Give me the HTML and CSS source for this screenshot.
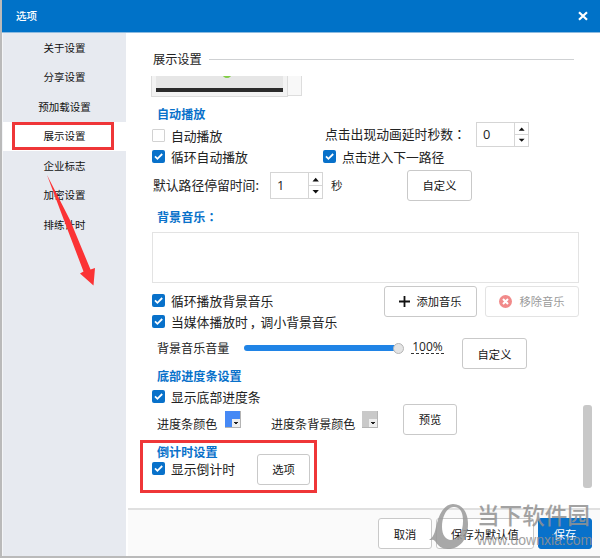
FILE: index.html
```html
<!DOCTYPE html>
<html lang="zh-CN">
<head>
<meta charset="utf-8">
<title>选项</title>
<link rel="stylesheet" href="styles.css">
</head>
<body>
<svg class="defs" width="0" height="0">
  <symbol id="check" viewBox="0 0 13 13"><path d="M3 6.4 5.4 8.8 10.2 4" fill="none" stroke="#fff" stroke-width="1.8"/></symbol>
  <symbol id="arrows" viewBox="0 0 12 25"><path d="M3 8.500h6.400L6.200 4.800zM3 17h6.400L6.200 20.500z" fill="#111"/></symbol>
</svg>
<div class="window">
  <header class="titlebar">
    <span>选项</span>
    <svg class="close" width="10" height="10" viewBox="0 0 10 10"><path d="M1 1.200 9 8.800M9 1.200 1 8.800" stroke="#fff" stroke-width="2.200"/></svg>
  </header>
  <div class="body">
    <nav class="sidebar">
      <a class="item">关于设置</a>
      <a class="item">分享设置</a>
      <a class="item">预加载设置</a>
      <a class="item active">展示设置</a>
      <a class="item">企业标志</a>
      <a class="item">加密设置</a>
      <a class="item">排练计时</a>
    </nav>
    <div class="main">
      <section class="content">
        <h1 class="heading"><span>展示设置</span></h1>
        <div class="preview"><div class="thumb"><i class="dot"></i><i class="bar"></i></div><div class="track"></div></div>

        <h2 class="title title-play">自动播放</h2>
        <div class="row row-auto">
          <label class="option"><i class="box"></i>自动播放</label>
          <span class="delay-label">点击出现动画延时秒数<span class="mid" lang="zh-TW">：</span></span>
          <div class="spin"><span>0</span><svg><use href="#arrows"/></svg></div>
        </div>
        <div class="row row-loop">
          <label class="option"><svg class="box on"><use href="#check"/></svg>循环自动播放</label>
          <label class="option next"><svg class="box on"><use href="#check"/></svg>点击进入下一路径</label>
        </div>
        <div class="row row-stay">
          <span class="stay-label">默认路径停留时间:</span>
          <div class="spin tall"><span>1</span><svg><use href="#arrows"/></svg></div>
          <span class="unit">秒</span>
          <button class="btn custom-path">自定义</button>
        </div>

        <h2 class="title title-music">背景音乐<span class="mid" lang="zh-TW">：</span></h2>
        <div class="playlist"></div>
        <div class="row row-music">
          <label class="option"><svg class="box on"><use href="#check"/></svg>循环播放背景音乐</label>
          <div class="music-actions">
            <button class="btn add"><svg width="11" height="11" viewBox="0 0 11 11"><path d="M5.500 0v11M0 5.500h11" stroke="#111" stroke-width="1.800"/></svg>添加音乐</button>
            <button class="btn remove"><svg width="13" height="13" viewBox="0 0 13 13"><circle cx="6.500" cy="6.500" r="6.500" fill="#f18a8a"/><path d="M4 4l5 5M9 4 4 9" stroke="#fff" stroke-width="2"/></svg>移除音乐</button>
          </div>
        </div>
        <div class="row row-duck">
          <label class="option"><svg class="box on"><use href="#check"/></svg>当媒体播放时<span class="comma">，</span>调小背景音乐</label>
        </div>
        <div class="row row-volume">
          <span class="label volume-label">背景音乐音量</span>
          <div class="slider"><i class="fill"></i><i class="knob"></i></div>
          <span class="percent">100%</span>
          <button class="btn custom-volume">自定义</button>
        </div>

        <h2 class="title title-progress">底部进度条设置</h2>
        <div class="row row-show">
          <label class="option"><svg class="box on"><use href="#check"/></svg>显示底部进度条</label>
        </div>
        <div class="row row-colors">
          <span class="label color-label">进度条颜色</span>
          <i class="swatch blue"></i>
          <span class="label back-label">进度条背景颜色</span>
          <i class="swatch gray"></i>
          <button class="btn try">预览</button>
        </div>

        <h2 class="title title-count">倒计时设置</h2>
        <div class="row row-count">
          <label class="option"><svg class="box on"><use href="#check"/></svg>显示倒计时</label>
          <button class="btn choose">选项</button>
        </div>
      </section>
      <footer class="footer">
        <button class="btn cancel">取消</button>
        <button class="btn default">保存为默认值</button>
        <button class="btn save">保存</button>
      </footer>
    </div>
  </div>
  <i class="scrollbar"></i>
  <i class="mark mark-nav"></i>
  <i class="mark mark-count"></i>
  <svg class="pointer" width="52" height="112" viewBox="0 0 52 112"><path d="M0 1 15 41 36.500 97.500 33 99.500 46.500 111.500 48 94 43.500 95.500 23 46Z" fill="#fb3335"/></svg>
  <div class="watermark">
    <svg width="45" height="48" viewBox="0 0 45 48"><path fill-rule="evenodd" d="M0 37C6 33 6 27 8 20C11 8 17 1 24 1C33 1 39 9 39 21C39 36 31 46 19 46C13 46 9 43 6 38C4 36 3 37 0 37ZM25 4C18 4 13 13 13 24C13 32 17 37 22 37C30 37 34 28 34 18C34 9 31 4 25 4Z" fill="#999"/></svg>
    <div class="brand"><b>当下软件园</b><span>www.downxia.com</span></div>
  </div>
</div>
</body>
</html>
```

FILE: styles.css
```css
* { box-sizing: border-box; }
body { margin: 0; font-family: "Noto Sans CJK SC", sans-serif; font-size: 12.8px; color: #222; }
.defs { position: absolute; }
.mid { font-family: "Noto Sans CJK TC", sans-serif; }
.comma { padding-left: 2px; margin-right: -2px; }
.window { position: relative; width: 600px; height: 558px; overflow: hidden; display: flex; flex-direction: column; border-left: 2px solid #bababa; border-bottom: 2px solid #bababa; background: #fff; }
.titlebar { height: 33px; flex: none; margin-left: -2px; padding: 0 12px 1px 16px; display: flex; align-items: center; justify-content: space-between; background: #0072c8; border-bottom: 1px solid #8dbbe0; color: #fff; font-size: 10.5px; font-weight: 500; }
.close { display: block; }
.body { flex: 1; display: flex; min-height: 0; }
.sidebar { width: 124px; flex: none; margin-right: 2px; background: #e7eaf0; border-left: 1px solid #f4f5f7; }
.item { display: flex; height: 29.500px; padding-bottom: 1px; align-items: center; justify-content: center; font-size: 10.500px; color: #111; }
.item.active { background: #fff; }
.main { flex: 1; display: flex; flex-direction: column; min-width: 0; }
.content { height: 475px; padding: 17px 0 0 24px; }
.heading { display: flex; align-items: center; gap: 7px; height: 18px; margin: 0 26px 0 0; padding-left: 1px; font-size: 12.200px; font-weight: 400; }
.heading::after { content: ""; flex: 1; height: 1px; background: #cfd1d3; }
.preview { display: flex; height: 20px; margin-top: 8px; }
.thumb { position: relative; width: 135px; background: #e6e6e6; border: solid #f3f3f3; border-width: 0 4px 4px; outline: 1px solid #dcdcdc; clip-path: inset(0 -1px -1px); overflow: hidden; }
.dot { position: absolute; left: 66px; top: -9px; width: 10px; height: 11px; border-radius: 50%; background: #82cd47; }
.bar { position: absolute; left: 0; right: 0; bottom: 0; height: 4px; background: #2b2b2b; }
.track { width: 15px; border: 1px solid #ddd; border-top: 0; background: #f8f8f8; }
.title { display: flex; align-items: center; height: 18px; margin: 0 0 0 5px; padding-bottom: 2px; font-size: 12.100px; font-weight: 600; color: #0871ca; }
.title-play { margin-top: 9px; }
.title-music { margin-top: 8px; }
.title-progress { margin-top: -1px; }
.title-count { margin-top: 9px; }
.row { display: flex; align-items: center; height: 18px; white-space: nowrap; }
.option { display: flex; align-items: center; width: 171px; flex: none; line-height: 18px; margin-top: -1px; }
.box { display: block; flex: none; width: 13px; height: 13px; margin-right: 6px; border: 1px solid #d2d2d2; border-radius: 1px; background: #fff; }
.box.on { border: 0; border-radius: 2px; background: #0871ca; }
.spin { display: flex; width: 53px; height: 25px; border: 1px solid #d5d5d5; flex: none; }
.spin span { flex: 1; display: flex; align-items: center; padding-left: 6px; font-family: "Open Sans", sans-serif; }
.spin svg { width: 14px; height: 100%; border-left: 1px solid #d5d5d5; background: linear-gradient(#d5d5d5, #d5d5d5) center / 100% 1px no-repeat; }
.spin.tall { height: 27px; }
.btn { display: flex; align-items: center; justify-content: center; flex: none; height: 31px; padding: 0; border: 1px solid #c9c9c9; border-radius: 3px; background: #fff; color: #151515; font: 11.300px "Noto Sans CJK SC", sans-serif; }
.label { font-size: 12.050px; flex: none; }
.row-auto { height: 24px; margin-top: 1px; }
.delay-label { width: 151px; margin: -5px 0 0 2px; }
.row-auto .spin { margin-top: -4px; }
.row-stay { height: 30px; margin-top: 4px; }
.stay-label { width: 118px; padding-left: 1px; margin-top: -2px; }
.unit { width: 76px; margin-left: 8px; font-size: 11.500px; }
.custom-path { width: 65px; }
.playlist { width: 427px; height: 51px; margin-top: 6px; border: 1px solid #e3e3e3; }
.row-music { height: 30px; margin-top: 3px; }
.music-actions { display: flex; gap: 8px; margin-left: 61px; }
.add { width: 93px; gap: 6px; }
.remove { width: 94px; gap: 7px; color: #9a9a9a; border-color: #e3e3e3; }
.row-duck { margin-top: -3px; }
.row-volume { height: 30px; margin-top: 7px; align-items: flex-start; }
.volume-label { width: 87px; margin-left: 5px; line-height: 20px; }
.slider { position: relative; width: 160px; height: 20px; display: flex; align-items: center; }
.fill { flex: 1; height: 6px; margin-right: 6px; border-radius: 3px; background: #2084e6; }
.knob { position: absolute; right: 0; top: 5px; width: 11px; height: 11px; border: 1px solid #b5b5b5; border-radius: 50%; background: #e4e4e4; }
.percent { width: 33px; height: 16px; margin-left: 7px; border-bottom: 1px dashed #333; font: 12px/18px "Open Sans", sans-serif; text-align: center; }
.custom-volume { width: 65px; margin-left: 18px; }
.row-show { margin-top: 3px; }
.row-colors { height: 30px; margin-top: -2px; }
.color-label { width: 68px; margin: 8px 0 0 5px; }
.back-label { width: 91px; margin: 8px 0 0 30px; }
.swatch { flex: none; position: relative; width: 16px; height: 17px; border: solid #b4b4b4; border-width: 0 1px 1px 0; background: #4689f5; }
.swatch.gray { background: #c9c9c9; }
.swatch::after { content: ""; position: absolute; right: 0; bottom: 0; width: 8px; height: 8px; background: linear-gradient(#222, #222) 2px 3px / 4px 1px no-repeat, linear-gradient(#222, #222) 3px 4px / 2px 1px no-repeat, #eee; }
.try { width: 54px; margin-left: 25px; }
.row-count { height: 30px; margin-top: -7px; }
.row-count .option { width: 105px; }
.choose { width: 53px; }
.footer { flex: 1; display: flex; gap: 4px; justify-content: flex-end; padding: 8px 8px 0 0; border-top: 2px solid #e0e0e0; background: #fafafa; }
.cancel { width: 54px; }
.default { width: 98px; }
.save { width: 54px; border-color: #0871ca; background: #0871ca; color: #fff; }
.scrollbar { position: absolute; left: 581px; top: 405px; width: 9px; height: 83px; border-radius: 3px; background: #c8c8c8; }
.mark { position: absolute; border: 3px solid #ef3638; }
.mark-nav { left: 10px; top: 122px; width: 102px; height: 28px; }
.mark-count { left: 138px; top: 440px; width: 177px; height: 53px; }
.pointer { position: absolute; left: 45px; top: 174px; }
.watermark { position: absolute; left: 427px; top: 503px; display: flex; gap: 3px; opacity: .85; color: #929292; }
.brand { display: flex; flex-direction: column; }
.brand b { font-size: 22.600px; line-height: 24px; font-weight: 500; }
.brand span { margin-top: 4px; font: 14px/18px "Liberation Sans", sans-serif; }
```
